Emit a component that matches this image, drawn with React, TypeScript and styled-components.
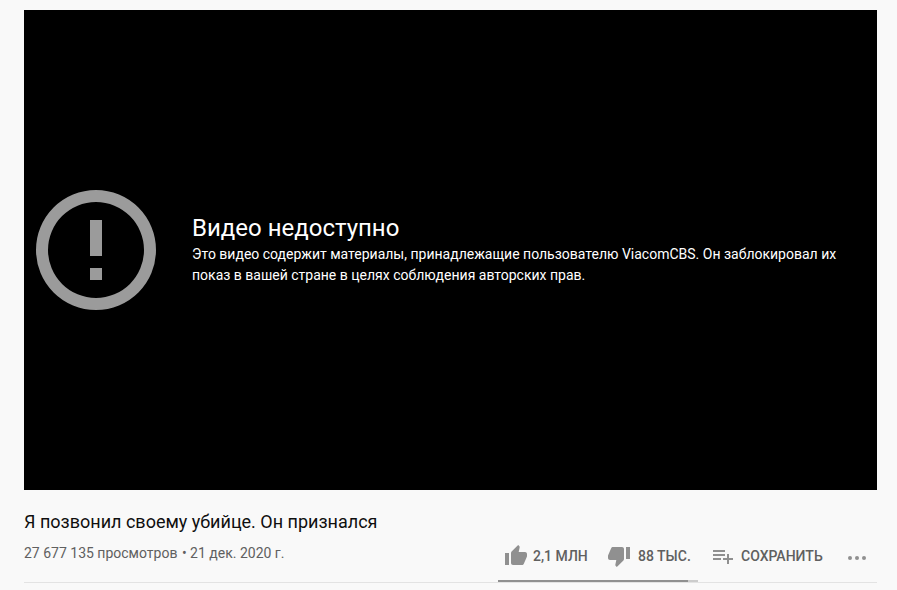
import * as React from 'react';
import styled, { createGlobalStyle } from 'styled-components';

const GlobalStyle = createGlobalStyle`
  html, body {
    margin: 0;
    padding: 0;
    background: #f9f9f9;
    font-family: Roboto, "Noto Sans", sans-serif;
    overflow: hidden;
  }
`;

const Page = styled.div`
  width: 897px;
  height: 590px;
  box-sizing: border-box;
  padding: 10px 20px 0 24px;
`;

const Player = styled.div`
  height: 480px;
  background: #000;
  display: flex;
  align-items: center;
  gap: 36px;
  padding-left: 12px;
`;

const ErrorIcon = styled.svg`
  width: 120px;
  height: 120px;
  flex-shrink: 0;
  fill: #9b9b9b;
`;

const ErrorText = styled.div`
  width: 660px;
  color: #fff;
`;

const ErrorTitle = styled.div`
  font-size: 24px;
  line-height: 28px;
`;

const ErrorMessage = styled.div`
  font-size: 14px;
  line-height: 21px;
  margin-top: 2px;
`;

const Title = styled.h1`
  margin: 21px 0 0;
  font-size: 18px;
  font-weight: 400;
  line-height: 22px;
  color: #0f0f0f;
`;

const InfoRow = styled.div`
  position: relative;
  height: 40px;
  margin-top: 9px;
  display: flex;
  justify-content: space-between;
  border-bottom: 1px solid #e3e3e3;
`;

const Views = styled.div`
  font-size: 14px;
  line-height: 20px;
  margin-top: 1px;
  color: #606060;
`;

const Separator = styled.span`
  margin: 0 0 0 1px;
`;

const Actions = styled.div`
  display: flex;
  align-items: flex-start;
  margin-top: 2px;
  padding-right: 9px;
`;

const Action = styled.div<{ $width: number; $gap?: number }>`
  width: ${(p) => p.$width}px;
  height: 24px;
  display: flex;
  align-items: center;
  gap: ${(p) => p.$gap ?? 5}px;
`;

const ActionIcon = styled.svg`
  width: 24px;
  height: 24px;
  flex-shrink: 0;
  fill: #909090;
`;

const ActionLabel = styled.span`
  font-size: 14px;
  font-weight: 500;
  color: #606060;
`;

const Sentiment = styled.div`
  position: absolute;
  right: 179px;
  bottom: 0;
  width: 200px;
  height: 2px;
  background: #ccc;
`;

const SentimentFill = styled.div`
  height: 100%;
  background: #909090;
`;

const App: React.FC = () => (
  <Page>
    <GlobalStyle />
    <Player>
      <ErrorIcon viewBox="0 0 120 120">
        <path d="M60 0a60 60 0 1 0 0 120A60 60 0 0 0 60 0zm0 12a48 48 0 1 1 0 96 48 48 0 0 1 0-96z" />
        <path d="M54 30h12v36H54zM54 78h12v12H54z" />
      </ErrorIcon>
      <ErrorText>
        <ErrorTitle>Видео недоступно</ErrorTitle>
        <ErrorMessage>
          Это видео содержит материалы, принадлежащие пользователю ViacomCBS. Он заблокировал их показ в вашей стране в целях соблюдения авторских прав.
        </ErrorMessage>
      </ErrorText>
    </Player>
    <Title>Я позвонил своему убийце. Он признался</Title>
    <InfoRow>
      <Views>
        27 677 135 просмотров <Separator>•</Separator> 21 дек. 2020 г.
      </Views>
      <Actions>
        <Action $width={103}>
          <ActionIcon viewBox="0 0 24 24">
            <path d="M1 21h4V9H1v12zm22-11c0-1.1-.9-2-2-2h-6.31l.95-4.57.03-.32c0-.41-.17-.79-.44-1.06L14.17 1 7.59 7.59C7.22 7.95 7 8.45 7 9v10c0 1.1.9 2 2 2h9c.83 0 1.54-.5 1.84-1.22l3.02-7.05c.09-.23.14-.47.14-.73v-2z" />
          </ActionIcon>
          <ActionLabel>2,1 МЛН</ActionLabel>
        </Action>
        <Action $width={104} $gap={7}>
          <ActionIcon viewBox="0 0 24 24">
            <path d="M15 3H6c-.83 0-1.54.5-1.84 1.22l-3.02 7.05c-.09.23-.14.47-.14.73v2c0 1.1.9 2 2 2h6.31l-.95 4.57-.03.32c0 .41.17.79.44 1.06L9.83 23l6.59-6.59c.36-.36.58-.86.58-1.41V5c0-1.1-.9-2-2-2zm4 0v12h4V3h-4z" />
          </ActionIcon>
          <ActionLabel>88 ТЫС.</ActionLabel>
        </Action>
        <Action $width={133} $gap={6}>
          <ActionIcon viewBox="0 0 24 24">
            <path d="M14 10H2v2h12v-2zm0-4H2v2h12V6zm4 8v-4h-2v4h-4v2h4v4h2v-4h4v-2h-4zM2 16h8v-2H2v2z" />
          </ActionIcon>
          <ActionLabel>СОХРАНИТЬ</ActionLabel>
        </Action>
        <Action $width={24}>
          <ActionIcon viewBox="0 0 24 24">
            <circle cx="6" cy="14" r="2" />
            <circle cx="13" cy="14" r="2" />
            <circle cx="20" cy="14" r="2" />
          </ActionIcon>
        </Action>
      </Actions>
      <Sentiment>
        <SentimentFill style={{ width: '95%' }} />
      </Sentiment>
    </InfoRow>
  </Page>
);

export default App;
